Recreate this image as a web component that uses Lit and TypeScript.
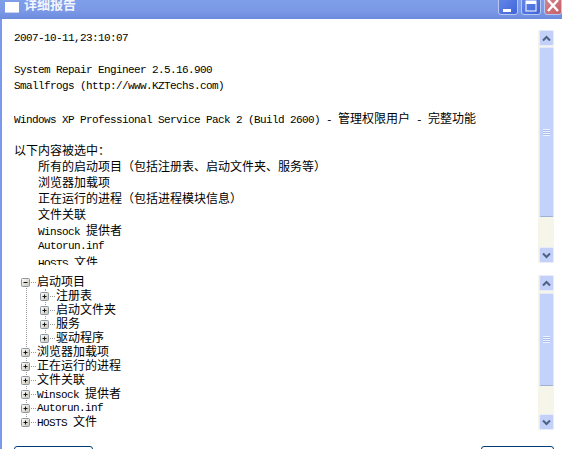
import { LitElement, html, css, svg } from "lit";
import { customElement } from "lit/decorators.js";

const cjkText = (text: string) =>
  text
    .split(/([\u3000-\u9fff\uff00-\uffef]+)/)
    .map((part, i) => (i % 2 ? html`<span class="cjk">${part}</span>` : part));

const REPORT: { text: string; sub?: boolean }[] = [
  { text: "2007-10-11,23:10:07" },
  { text: "" },
  { text: "System Repair Engineer 2.5.16.900" },
  { text: "Smallfrogs (http://www.KZTechs.com)" },
  { text: "" },
  { text: "Windows XP Professional Service Pack 2 (Build 2600) - 管理权限用户 - 完整功能" },
  { text: "" },
  { text: "以下内容被选中：" },
  { text: "所有的启动项目（包括注册表、启动文件夹、服务等）", sub: true },
  { text: "浏览器加载项", sub: true },
  { text: "正在运行的进程（包括进程模块信息）", sub: true },
  { text: "文件关联", sub: true },
  { text: "Winsock 提供者", sub: true },
  { text: "Autorun.inf", sub: true },
  { text: "HOSTS 文件", sub: true },
];

const STARTUP_CHILDREN = ["注册表", "启动文件夹", "服务", "驱动程序"];
const TREE_ROOTS = ["浏览器加载项", "正在运行的进程", "文件关联", "Winsock 提供者", "Autorun.inf", "HOSTS 文件"];

const expander = (open: boolean) => html`
  <svg class="expander" width="11" height="11" viewBox="0 0 11 11">
    <defs>
      <linearGradient id="exp" x1="0" y1="0" x2="1" y2="1">
        <stop offset="0" stop-color="#ffffff"></stop>
        <stop offset="1" stop-color="#c6c2b4"></stop>
      </linearGradient>
    </defs>
    <rect x="1.5" y="1.5" width="8" height="8" rx="1" fill="url(#exp)" stroke="#8c96a0"></rect>
    <path d="M3.5 5.5h4" stroke="#111" fill="none"></path>
    ${open ? null : svg`<path d="M5.5 3.5v4" stroke="#111" fill="none"></path>`}
  </svg>
`;

const chevron = (up: boolean) => html`
  <svg width="9" height="7" viewBox="0 0 9 7">
    <path
      d=${up ? "M1 5.5 4.5 2 8 5.5" : "M1 1.5 4.5 5 8 1.5"}
      fill="none"
      stroke="#4d6185"
      stroke-width="2"></path>
  </svg>
`;

// total track runs between the two arrow buttons
const scrollbar = (thumbTop: number, thumbHeight: number, height: number) => html`
  <div class="scrollbar" style="height:${height}px">
    <div class="arrow">${chevron(true)}</div>
    <div class="track">
      <div class="thumb" style="margin-top:${thumbTop}px;height:${thumbHeight}px">
        <div class="grip"></div>
      </div>
    </div>
    <div class="arrow">${chevron(false)}</div>
  </div>
`;

const treeRow = (label: string, open: boolean, child = false) => html`
  <div class="row ${child ? "child" : ""}">
    ${expander(open)}<span class="stub"></span><span class="label">${cjkText(label)}</span>
  </div>
`;

@customElement("app-root")
export class AppRoot extends LitElement {
  static styles = css`
    :host {
      display: block;
      width: 562px;
      height: 449px;
      overflow: hidden;
      background: #fff;
      font-family: "Liberation Mono", "Noto Sans CJK SC", monospace;
      font-size: 11px;
      letter-spacing: -0.6px;
      color: #000;
    }

    .cjk {
      font-family: "Noto Sans CJK SC", sans-serif;
      font-size: 12px;
      letter-spacing: 0;
    }

    .titlebar {
      display: flex;
      align-items: flex-end;
      height: 19px;
      padding: 0 0 4px 5px;
      box-sizing: border-box;
      background: linear-gradient(180deg, #7f9fe9 0%, #7a98e6 60%, #6d8bdd 100%);
      overflow: hidden;
    }

    .app-icon {
      width: 14px;
      height: 10px;
      margin-bottom: 2px;
      flex: none;
      background: #fff;
      border-bottom: 1px solid #c8d2ee;
    }

    .title {
      margin: 0 0 4px 5px;
      color: #fff;
      font: bold 13px/15px "Noto Sans CJK SC", sans-serif;
      letter-spacing: 0;
      flex: 1;
      opacity: 0.9;
    }

    .wbtn {
      flex: none;
      display: flex;
      align-items: flex-end;
      justify-content: center;
      width: 20px;
      height: 22px;
      margin-left: 3px;
      box-sizing: border-box;
      padding-bottom: 2px;
      border: 1px solid #b9c8f2;
      border-radius: 3px;
      background: linear-gradient(135deg, #6a8ceb, #3f64d8);
    }

    .wbtn.close {
      width: 18px;
      background: linear-gradient(135deg, #d58a92, #c65e68);
    }

    .content {
      display: flex;
      flex-direction: column;
      height: 430px;
      box-sizing: border-box;
      padding: 0 8px 0 12px;
      border-left: 2px solid #7b98ea;
    }

    .report {
      display: flex;
      flex: none;
      justify-content: space-between;
      height: 246px;
      overflow: hidden;
    }

    .report-text {
      padding-top: 11px;
    }

    .line {
      height: 16px;
      line-height: 16px;
      white-space: pre;
    }

    .line.sub {
      padding-left: 24px;
    }

    .report .scrollbar {
      margin-top: 11px;
    }

    .tree-panel {
      display: flex;
      flex: none;
      justify-content: space-between;
      height: 158px;
      margin-top: 8px;
    }

    .tree {
      position: relative;
      padding: 2px 0 0 6px;
    }

    /* dotted guide down the root expanders */
    .tree::before {
      content: "";
      position: absolute;
      left: 12px;
      top: 10px;
      height: 144px;
      border-left: 1px dotted #999;
    }

    .children {
      position: relative;
    }

    .children::before {
      content: "";
      position: absolute;
      left: 25px;
      top: 0;
      height: 50px;
      border-left: 1px dotted #999;
    }

    .row {
      position: relative;
      display: flex;
      align-items: center;
      height: 14px;
    }

    .row.child {
      padding-left: 19px;
    }

    .label {
      white-space: pre;
      line-height: 14px;
    }

    .expander {
      flex: none;
      position: relative;
      z-index: 1;
      background: #fff;
    }

    .stub {
      flex: none;
      width: 5px;
      margin-right: 1px;
      border-top: 1px dotted #999;
    }

    .tree-side {
      margin-top: 2px;
    }

    .scrollbar {
      display: flex;
      flex-direction: column;
      width: 16px;
      flex: none;
      background: #f5f5ea;
    }

    .arrow {
      display: flex;
      align-items: center;
      justify-content: center;
      flex: none;
      width: 15px;
      height: 16px;
      margin-left: 1px;
      box-sizing: border-box;
      border: 1px solid #e6ecfb;
      border-radius: 2px;
      background: #c3d1f8;
    }

    .track {
      flex: 1;
      margin-left: 1px;
      overflow: hidden;
    }

    .thumb {
      display: flex;
      align-items: center;
      justify-content: center;
      box-sizing: border-box;
      border: 1px solid #e2e9fb;
      border-bottom-color: #9fb0d6;
      border-radius: 2px;
      background: #c3d2fb;
    }

    .grip {
      width: 7px;
      height: 7px;
      background: repeating-linear-gradient(180deg, #eef3fe 0 1px, #a9bbe8 1px 2px);
    }

    .actions {
      display: flex;
      flex: none;
      justify-content: space-between;
      margin-top: 15px;
    }

    .action {
      width: 79px;
      height: 20px;
      box-sizing: border-box;
      border: 1px solid #003c74;
      border-radius: 3px;
      background: #fff;
    }

    .action.right {
      width: 73px;
    }
  `;

  render() {
    return html`
      <div class="titlebar">
        <div class="app-icon"></div>
        <div class="title">详细报告</div>
        <div class="wbtn">
          <svg width="10" height="4"><rect y="1" width="8" height="3" fill="#fff"></rect></svg>
        </div>
        <div class="wbtn">
          <svg width="12" height="12"><rect x="1" y="1" width="10" height="10" fill="none" stroke="#fff"></rect><rect x="1" y="1" width="10" height="3" fill="#fff"></rect></svg>
        </div>
        <div class="wbtn close">
          <svg width="12" height="12"><path d="M1 0 11 11M11 0 1 11" stroke="#fff" stroke-width="2.4"></path></svg>
        </div>
      </div>
      <div class="content">
        <div class="report">
          <div class="report-text">
            ${REPORT.map(
              (l) => html`<div class="line ${l.sub ? "sub" : ""}">${cjkText(l.text)}</div>`
            )}
          </div>
          ${scrollbar(1, 170, 233)}
        </div>
        <div class="tree-panel">
          <div class="tree">
            ${treeRow("启动项目", true)}
            <div class="children">${STARTUP_CHILDREN.map((c) => treeRow(c, false, true))}</div>
            ${TREE_ROOTS.map((c) => treeRow(c, false))}
          </div>
          <div class="tree-side">${scrollbar(2, 93, 155)}</div>
        </div>
        <div class="actions">
          <div class="action"></div>
          <div class="action right"></div>
        </div>
      </div>
    `;
  }
}
